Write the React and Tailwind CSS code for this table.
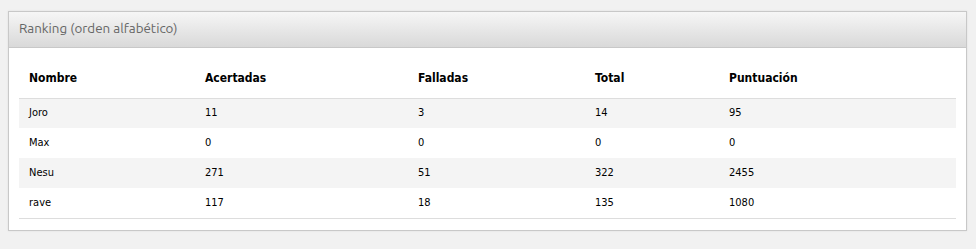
import React from "react";

const rows = [
  { name: "Joro", ok: 11, ko: 3, total: 14, pts: 95 },
  { name: "Max", ok: 0, ko: 0, total: 0, pts: 0 },
  { name: "Nesu", ok: 271, ko: 51, total: 322, pts: 2455 },
  { name: "rave", ok: 117, ko: 18, total: 135, pts: 1080 },
];

const cols = ["Nombre", "Acertadas", "Falladas", "Total", "Puntuación"];

export default function App() {
  return (
    <div className="min-h-[249px] bg-[#f1f1f1] pt-[11px] pl-[8px] pr-[9px]">
      <div className="border border-[#c8c8c8] bg-white shadow-[0_0_2px_rgba(0,0,0,0.08)]">
        <div className="h-[36px] border-b border-[#c8c8c8] bg-gradient-to-b from-[#f6f6f6] to-[#d9d9d9] px-[10px] flex items-center">
          <span className="font-['Ubuntu','Open_Sans','Noto_Sans',sans-serif] text-[13.4px] text-[#666]">
            Ranking (orden alfabético)
          </span>
        </div>
        <div className="px-[10px] pt-[10px] pb-[12px]">
          <table className="w-full border-collapse font-['DejaVu_Sans_Condensed','DejaVu_Sans',sans-serif] text-[11px] text-black">
            <thead>
              <tr className="h-[40px] border-b border-[#dddddd]">
                {cols.map((c, i) => (
                  <th
                    key={c}
                    className={
                      "text-left font-bold text-[12px] px-[10px] pt-[1px] " +
                      ["w-[176px]", "w-[213px]", "w-[177px]", "w-[134px]", ""][i]
                    }
                  >
                    {c}
                  </th>
                ))}
              </tr>
            </thead>
            <tbody>
              {rows.map((r, i) => (
                <tr
                  key={r.name}
                  className={
                    "h-[30px] " + (i % 2 === 0 ? "bg-[#f4f4f4]" : "bg-white")
                  }
                >
                  <td className="px-[10px]">{r.name}</td>
                  <td className="px-[10px]">{r.ok}</td>
                  <td className="px-[10px]">{r.ko}</td>
                  <td className="px-[10px]">{r.total}</td>
                  <td className="px-[10px]">{r.pts}</td>
                </tr>
              ))}
              <tr className="h-0 border-t border-[#dddddd]"></tr>
            </tbody>
          </table>
        </div>
      </div>
    </div>
  );
}
